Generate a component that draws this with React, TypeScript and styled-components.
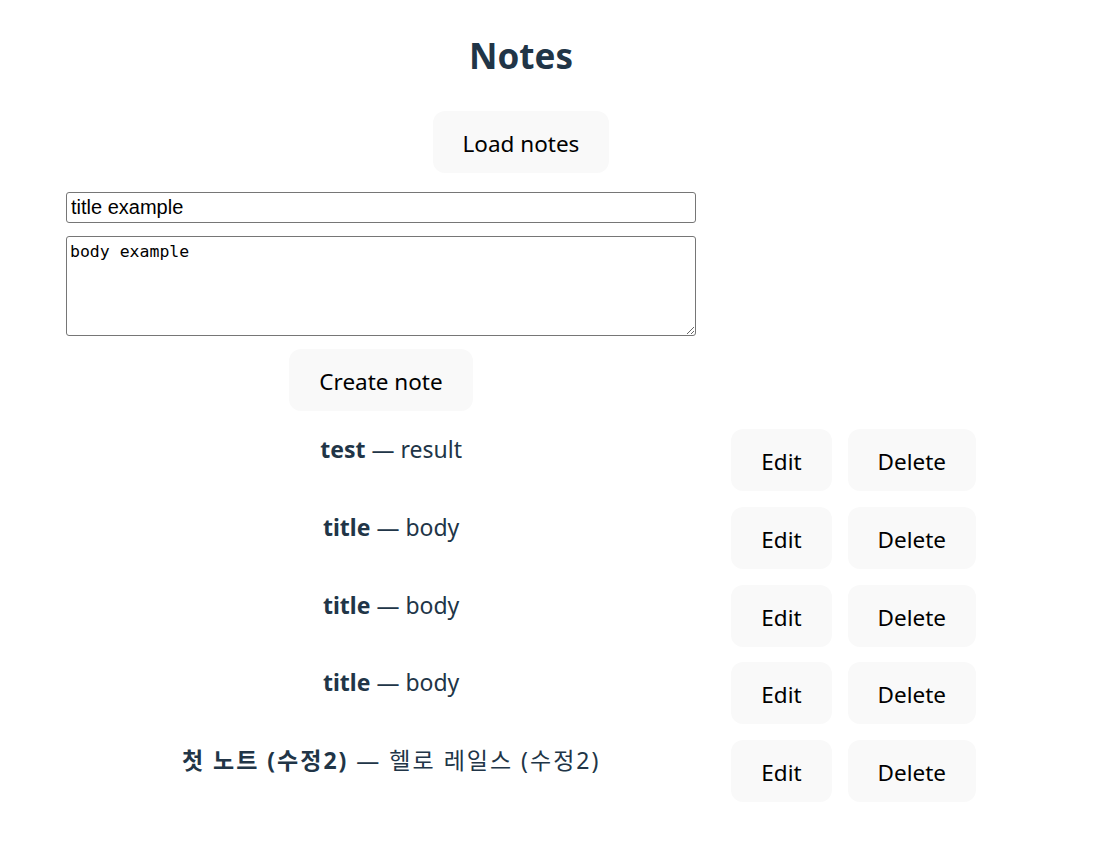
import React from "react";
import styled, { createGlobalStyle } from "styled-components";

const GlobalStyle = createGlobalStyle`
  html, body {
    margin: 0;
    padding: 0;
    background: #ffffff;
  }
  body {
    font-family: "Noto Sans", "Noto Sans CJK KR", sans-serif;
    color: #213547;
  }
`;

const Page = styled.div`
  padding: 35px 0 40px 66px;
`;

const Container = styled.main`
  width: 910px;
  display: flex;
  flex-direction: column;
`;

const Title = styled.h1`
  margin: 0;
  font-size: 35px;
  line-height: 42px;
  font-weight: 700;
  text-align: center;
  color: #213547;
`;

const Toolbar = styled.div`
  display: flex;
  justify-content: center;
  margin-top: 34px;
`;

const Button = styled.button`
  box-sizing: border-box;
  height: 62px;
  padding: 3px 29px 0;
  border: 1px solid transparent;
  border-radius: 12px;
  background: #f9f9f9;
  color: #000000;
  font-family: "Noto Sans", "Noto Sans CJK KR", sans-serif;
  font-size: 22.5px;
  font-weight: 400;
  line-height: 57px;
  cursor: pointer;
  white-space: nowrap;
`;

const Form = styled.form`
  width: 630px;
  margin-top: 19px;
  display: flex;
  flex-direction: column;
  align-items: center;
  gap: 13px;
`;

const TitleInput = styled.input`
  box-sizing: border-box;
  width: 630px;
  height: 31px;
  margin: 0;
  padding: 0 4px;
  border: 1px solid #767676;
  border-radius: 3px;
  font-family: "Liberation Sans", Arial, sans-serif;
  font-size: 20px;
  color: #000000;
  background: #ffffff;
`;

const BodyInput = styled.textarea`
  box-sizing: border-box;
  width: 630px;
  height: 100px;
  margin: 0;
  padding: 5px 3px 2px;
  border: 1px solid #767676;
  border-radius: 3px;
  font-family: "DejaVu Sans Mono", "Liberation Mono", monospace;
  font-size: 16.5px;
  line-height: 20px;
  color: #000000;
  background: #ffffff;
`;

const List = styled.ul`
  list-style: none;
  margin: 18px 0 0;
  padding: 0;
  display: flex;
  flex-direction: column;
  gap: 15.75px;
`;

const Row = styled.li`
  display: flex;
  align-items: flex-start;
  gap: 15px;
`;

const NoteText = styled.div`
  flex: 1;
  padding-top: 3px;
  text-align: center;
  font-size: 23px;
  line-height: 34px;
  color: #213547;
  white-space: nowrap;

  &:lang(ko) {
    letter-spacing: 2px;
  }
`;

const NoteTitle = styled.strong`
  font-weight: 700;
`;

const Actions = styled.div`
  display: flex;
  gap: 16px;
`;

const notes = [
  { title: "test", body: "result", lang: "en" },
  { title: "title", body: "body", lang: "en" },
  { title: "title", body: "body", lang: "en" },
  { title: "title", body: "body", lang: "en" },
  { title: "첫 노트 (수정2)", body: "헬로 레일스 (수정2)", lang: "ko" },
];

export default function App() {
  return (
    <>
      <GlobalStyle />
      <Page>
        <Container>
          <Title>Notes</Title>
          <Toolbar>
            <Button type="button">Load notes</Button>
          </Toolbar>
          <Form onSubmit={(e) => e.preventDefault()}>
            <TitleInput defaultValue="title example" />
            <BodyInput defaultValue="body example" />
            <Button type="submit">Create note</Button>
          </Form>
          <List>
            {notes.map((n, i) => (
              <Row key={i}>
                <NoteText lang={n.lang}>
                  <NoteTitle>{n.title}</NoteTitle> — {n.body}
                </NoteText>
                <Actions>
                  <Button type="button">Edit</Button>
                  <Button type="button">Delete</Button>
                </Actions>
              </Row>
            ))}
          </List>
        </Container>
      </Page>
    </>
  );
}
